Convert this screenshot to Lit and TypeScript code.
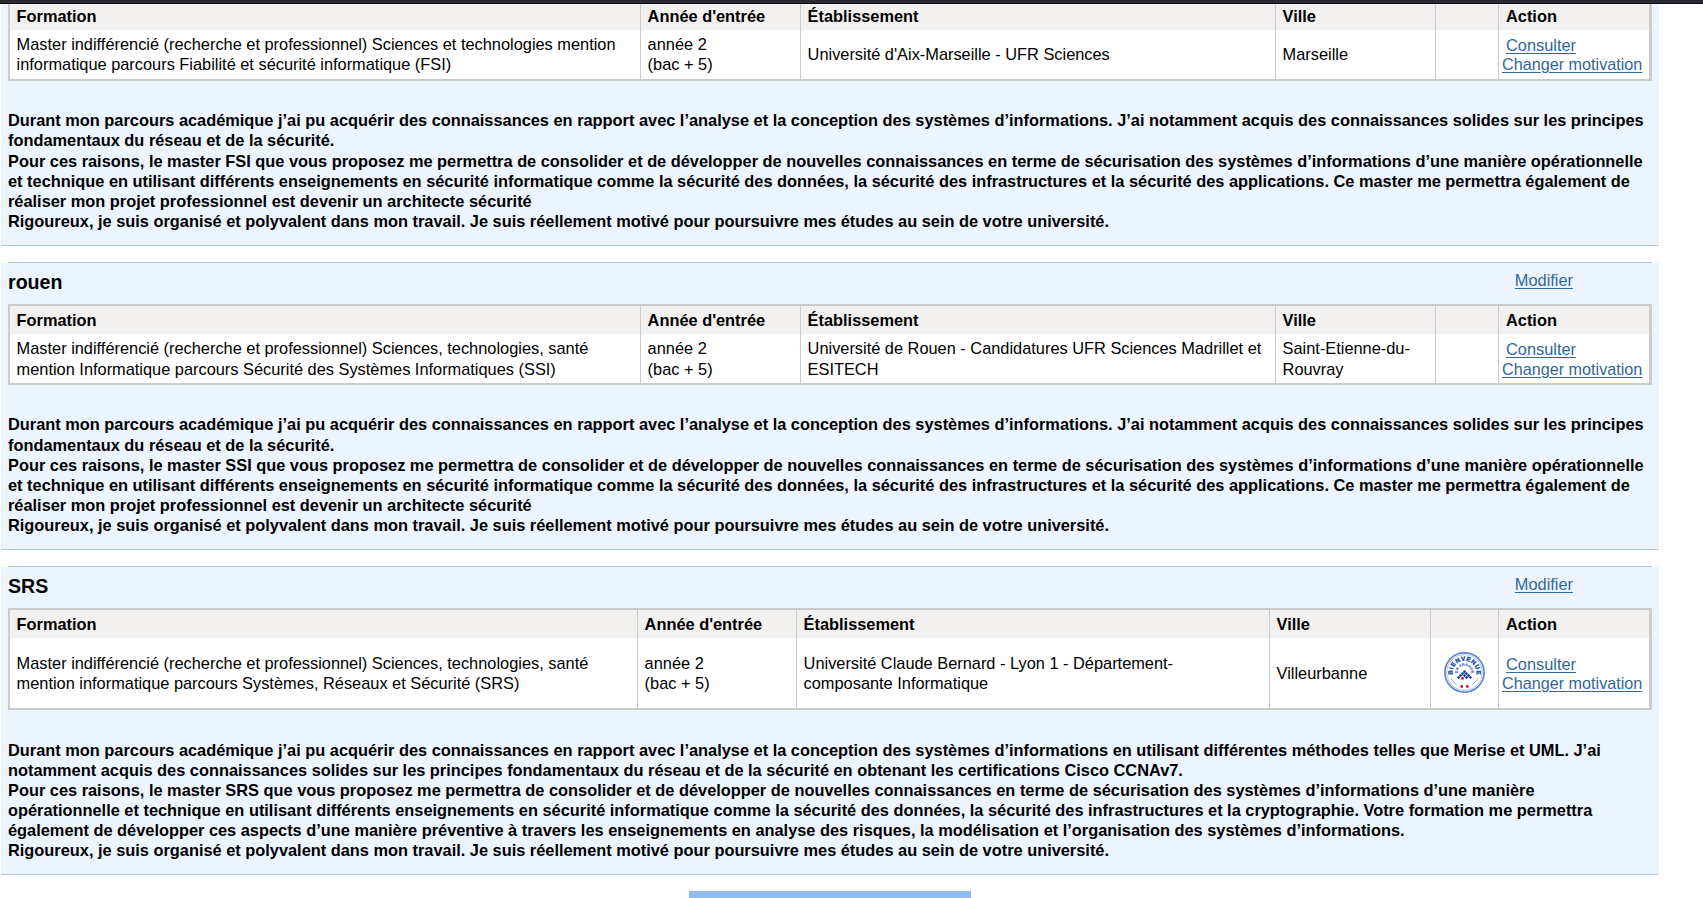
import { LitElement, html, css, svg, nothing } from "lit";
import { customElement, property } from "lit/decorators.js";
import { classMap } from "lit/directives/class-map.js";

interface Candidature {
  variant: string;
  title?: string;
  formation: string[];
  school: string[];
  city: string[];
  label?: boolean;
  motivation: string[];
}

const lettre = (code: string): string[] => [
  "Durant mon parcours académique j’ai pu acquérir des connaissances en rapport avec l’analyse et la conception des systèmes d’informations. J’ai notamment acquis des connaissances solides sur les principes",
  "fondamentaux du réseau et de la sécurité.",
  `Pour ces raisons, le master ${code} que vous proposez me permettra de consolider et de développer de nouvelles connaissances en terme de sécurisation des systèmes d’informations d’une manière opérationnelle`,
  "et technique en utilisant différents enseignements en sécurité informatique comme la sécurité des données, la sécurité des infrastructures et la sécurité des applications. Ce master me permettra également de",
  "réaliser mon projet professionnel est devenir un architecte sécurité",
  "Rigoureux, je suis organisé et polyvalent dans mon travail. Je suis réellement motivé pour poursuivre mes études au sein de votre université.",
];

const CANDIDATURES: Candidature[] = [
  {
    variant: "first",
    formation: [
      "Master indifférencié (recherche et professionnel) Sciences et technologies mention",
      "informatique parcours Fiabilité et sécurité informatique (FSI)",
    ],
    school: ["Université d'Aix-Marseille - UFR Sciences"],
    city: ["Marseille"],
    motivation: lettre("FSI"),
  },
  {
    variant: "second",
    title: "rouen",
    formation: [
      "Master indifférencié (recherche et professionnel) Sciences, technologies, santé",
      "mention Informatique parcours Sécurité des Systèmes Informatiques (SSI)",
    ],
    school: ["Université de Rouen - Candidatures UFR Sciences Madrillet et", "ESITECH"],
    city: ["Saint-Etienne-du-", "Rouvray"],
    motivation: lettre("SSI"),
  },
  {
    variant: "third",
    title: "SRS",
    formation: [
      "Master indifférencié (recherche et professionnel) Sciences, technologies, santé",
      "mention informatique parcours Systèmes, Réseaux et Sécurité (SRS)",
    ],
    school: ["Université Claude Bernard - Lyon 1 - Département-", "composante Informatique"],
    city: ["Villeurbanne"],
    label: true,
    motivation: [
      "Durant mon parcours académique j’ai pu acquérir des connaissances en rapport avec l’analyse et la conception des systèmes d’informations en utilisant différentes méthodes telles que Merise et UML. J’ai",
      "notamment acquis des connaissances solides sur les principes fondamentaux du réseau et de la sécurité en obtenant les certifications Cisco CCNAv7.",
      "Pour ces raisons, le master SRS que vous proposez me permettra de consolider et de développer de nouvelles connaissances en terme de sécurisation des systèmes d’informations d’une manière",
      "opérationnelle et technique en utilisant différents enseignements en sécurité informatique comme la sécurité des données, la sécurité des infrastructures et la cryptographie. Votre formation me permettra",
      "également de développer ces aspects d’une manière préventive à travers les enseignements en analyse des risques, la modélisation et l’organisation des systèmes d’informations.",
      "Rigoureux, je suis organisé et polyvalent dans mon travail. Je suis réellement motivé pour poursuivre mes études au sein de votre université.",
    ],
  },
];

@customElement("welcome-label")
class WelcomeLabel extends LitElement {
  static styles = css`
    :host { display: block; width: 41px; height: 41px; }
    svg { display: block; }
    .outer { font: bold 6.2px "Liberation Sans", Arial, sans-serif; fill: #2450ae; stroke: #2450ae; stroke-width: 0.4; }
    .inner { font: bold 3.5px "Liberation Sans", Arial, sans-serif; fill: #3f66bb; stroke: #3f66bb; stroke-width: 0.15; }
  `;

  render() {
    const dots = [
      [20.5, 19.8], [18.5, 21.6], [22.5, 21.6], [16.5, 23.5], [20.5, 23.5],
      [24.5, 23.5], [14.6, 25.4], [22.6, 25.4], [26.4, 25.4],
    ];
    return html`<svg width="41" height="41" viewBox="0 0 41 41">
      <defs>
        <path id="arc-out" d="M9.65 25.56A11.9 11.9 0 1 1 31.35 25.56" />
        <path id="arc-in" d="M14.3 23.3A6.8 6.8 0 1 1 26.7 23.3" />
      </defs>
      <circle cx="20.5" cy="20.5" r="19.6" fill="#fff" stroke="#6488cc" stroke-width="1.7" />
      <circle cx="20.5" cy="20.5" r="17.8" fill="none" stroke="#9db3e0" stroke-width="0.8" />
      <text class="outer"><textPath href="#arc-out" startOffset="50%" text-anchor="middle" textLength="41">BIENVENUE</textPath></text>
      <text class="inner"><textPath href="#arc-in" startOffset="50%" text-anchor="middle" textLength="22.5">EN FRANCE</textPath></text>
      ${dots.map(([x, y]) => svg`<path d="M${x} ${y - 1.7}l1.7 1.7-1.7 1.7-1.7-1.7z" fill="#1c3f9c"/>`)}
      <path d="M7 26.2Q9 30.5 12.6 32.6M34 26.2Q32 30.5 28.4 32.6" fill="none" stroke="#8ea6d8" stroke-width="0.9" />
      <circle cx="18.5" cy="26.4" r="1.4" fill="#e8102f" />
      <circle cx="17.8" cy="34.5" r="1.4" fill="#e8102f" />
      <circle cx="23.3" cy="34.5" r="1.4" fill="#e8102f" />
    </svg>`;
  }
}

@customElement("candidature-card")
class CandidatureCard extends LitElement {
  @property({ attribute: false }) item!: Candidature;

  static styles = css`
    :host { display: block; }
    .rule { height: 1px; margin: 0 7px; background: #b0cae2; }
    .card { background: #ecf5ff; border-bottom: 1px solid #b0cae2; padding: 0 7px; height: 286px; }
    .third .card { height: 307px; }
    .first .card { height: 241px; overflow: hidden; }
    .head { display: flex; justify-content: space-between; height: 41px; }
    .title { margin: 0; font-size: 19.6px; line-height: 23px; padding-top: 8px; }
    .head .link { margin: 8px 79px 0 0; height: 18px; line-height: 18px; }
    .link { color: #336699; text-decoration: underline; text-decoration-thickness: 1px; text-underline-offset: 2px; white-space: nowrap; }
    .table {
      display: grid;
      grid-template-columns: 631px 160px 475px 160px 63px 150px;
      grid-template-rows: 28px 49px;
      border: 2px solid #ccc;
      border-right-width: 3px;
      background: #fff;
    }
    .third .table { grid-template-columns: 628px 159px 473px 161px 68px 150px; grid-template-rows: 28px 70px; }
    .first .table { margin-top: -4px; }
    .th, .td { border-right: 1px solid #ccc; padding-left: 6.6px; white-space: nowrap; box-sizing: border-box; display: flex; flex-direction: column; justify-content: center; line-height: 20px; }
    .th { background: #f3f1f0; font-weight: bold; }
    .last { border-right: 0; padding-left: 7px; }
    .first .td { padding-bottom: 2px; }
    .second .td { line-height: 21px; }
    .td.actions, .second .td.actions, .third .td.actions { padding: 0 0 0 3px; line-height: 19px; align-items: flex-start; }
    .second .td.actions { line-height: 20px; padding-top: 1px; }
    .third .td.actions { padding-top: 2px; }
    .actions .link { font-size: 16.2px; }
    .actions .indent { font-size: 16.36px; margin-left: 4px; }
    .third .td.logo, .logo { align-items: center; padding: 0 0 1px; }
    .letter { margin: 0; padding-top: 29.2px; font-weight: bold; line-height: 20.2px; white-space: nowrap; }
    .second .letter { padding-top: 29.35px; }
    .third .letter { padding-top: 30px; line-height: 20px; }
    .line { display: block; }
  `;

  render() {
    const c = this.item;
    const lines = (l: string[]) => l.map((t) => html`<span>${t}</span>`);
    return html`<section class=${classMap({ [c.variant]: true })}>
      ${c.title ? html`<div class="rule"></div>` : nothing}
      <div class="card">
        ${c.title
          ? html`<div class="head"><h2 class="title">${c.title}</h2><a class="link">Modifier</a></div>`
          : nothing}
        <div class="table">
          <div class="th">Formation</div>
          <div class="th">Année d'entrée</div>
          <div class="th">Établissement</div>
          <div class="th">Ville</div>
          <div class="th"></div>
          <div class="th last">Action</div>
          <div class="td">${lines(c.formation)}</div>
          <div class="td">${lines(["année 2", "(bac + 5)"])}</div>
          <div class="td">${lines(c.school)}</div>
          <div class="td">${lines(c.city)}</div>
          <div class="td logo">${c.label ? html`<welcome-label></welcome-label>` : nothing}</div>
          <div class="td last actions">
            <a class="link indent">Consulter</a>
            <a class="link">Changer motivation</a>
          </div>
        </div>
        <p class="letter">${c.motivation.map((t) => html`<span class="line">${t}</span>`)}</p>
      </div>
    </section>`;
  }
}

@customElement("app-root")
class AppRoot extends LitElement {
  static styles = css`
    :host { display: block; height: 898px; overflow: hidden; background: #fff; color: #000; font: 16.36px "Liberation Sans", Arial, sans-serif; }
    .bar { height: 3px; background: #2b2a33; border-bottom: 1px solid #0c0c0d; }
    .list { display: flex; flex-direction: column; gap: 16px; width: 1658px; margin-left: 1px; }
    .button { width: 282px; height: 30px; margin: 16px 0 0 689px; background: #8fbcf1; }
  `;

  render() {
    return html`<div class="bar"></div>
      <main class="list">
        ${CANDIDATURES.map((c) => html`<candidature-card .item=${c}></candidature-card>`)}
      </main>
      <div class="button"></div>`;
  }
}
